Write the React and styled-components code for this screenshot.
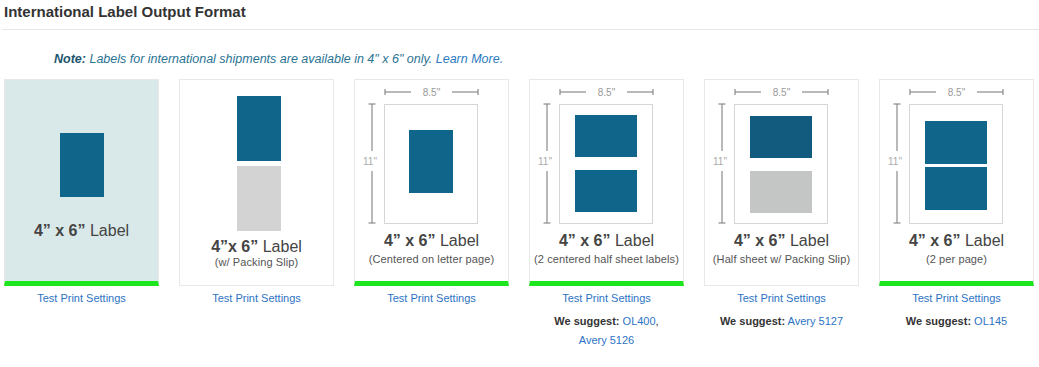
import React from 'react'
import styled, {createGlobalStyle} from 'styled-components'

const GlobalStyle = createGlobalStyle`
    body {
        margin: 0;
        background: #ffffff;
        font-family: "Liberation Sans", Arial, sans-serif;
    }
`

const BLUE = '#10658a'

const Page = styled.div`
    width: 1039px;
    padding: 2px 0 0 2px;
    box-sizing: border-box;
`

const Title = styled.h2`
    margin: 0 0 0 2px;
    font-size: 15px;
    line-height: 20px;
    font-weight: bold;
    color: #333333;
`

const Rule = styled.div`
    margin-top: 7px;
    height: 1px;
    background: #e6e6e6;
`

const Note = styled.p`
    margin: 21px 0 0 52px;
    font-size: 12.5px;
    line-height: 16px;
    font-style: italic;
    color: #2a7393;

    b {
        color: #1b5670;
    }

    a {
        color: #2a7bc0;
        text-decoration: none;
    }
`

const Row = styled.div`
    display: flex;
    gap: 20px;
    margin-top: 13px;
    padding-left: 2px;
`

const Column = styled.div`
    width: 155px;
    display: flex;
    flex-direction: column;
    align-items: center;
    text-align: center;
`

const Card = styled.div`
    width: 155px;
    height: 207px;
    box-sizing: border-box;
    border: 1px solid #e8e8e8;
    border-bottom: ${props => props.$selected ? '5px solid #1ee61e' : '1px solid #e8e8e8'};
    background: ${props => props.$tinted ? '#d9e8e9' : '#ffffff'};
    display: flex;
    flex-direction: column;
    align-items: center;
    margin-top: -1px;
`

const Diagram = styled.svg`
    display: block;
    flex-shrink: 0;
    margin-left: -1px;
`

const LabelText = styled.div`
    font-size: 16px;
    line-height: 18px;
    color: #444444;

    b {
        font-weight: bold;
    }
`

const SubText = styled.div`
    margin-top: ${props => props.$offset}px;
    font-size: 11px;
    line-height: 12px;
    color: #555555;
    letter-spacing: 0.1px;
`

const TestLink = styled.a`
    margin-top: 5px;
    font-size: 11px;
    line-height: 14px;
    color: #2d73c4;
    text-decoration: none;
`

const Suggest = styled.div`
    margin-top: 7px;
    font-size: 11px;
    line-height: 19px;
    color: #333333;

    b {
        font-weight: bold;
    }

    a {
        color: #2d73c4;
        text-decoration: none;
        white-space: nowrap;
    }
`

const Letter = ({children}) => (
    <Diagram width="155" height="152" viewBox="0 0 155 152">
        <g stroke="#8a8a8a" strokeWidth="1.2" fill="none">
            <line x1="31" y1="12" x2="57" y2="12" />
            <line x1="98" y1="12" x2="124" y2="12" />
            <line x1="31" y1="9" x2="31" y2="15" />
            <line x1="124" y1="9" x2="124" y2="15" />
            <line x1="18" y1="24" x2="18" y2="71" />
            <line x1="18" y1="91" x2="18" y2="143" />
            <line x1="14.5" y1="24" x2="21.5" y2="24" />
            <line x1="14.5" y1="143" x2="21.5" y2="143" />
        </g>
        <text x="77.5" y="15.5" textAnchor="middle" fontSize="10" fill="#999999" fontFamily="Liberation Sans, Arial, sans-serif">8.5"</text>
        <text x="16" y="85" textAnchor="middle" fontSize="10" fill="#aaaaaa" fontFamily="Liberation Sans, Arial, sans-serif">11"</text>
        <rect x="30.5" y="24.5" width="93" height="119" fill="#ffffff" stroke="#d6d6d6" />
        {children}
    </Diagram>
)

const formats = [
    {
        key: 'single',
        selected: true,
        tinted: true,
        label: <><b>4” x 6”</b> Label</>,
        graphic: (
            <Diagram width="155" height="142" viewBox="0 0 155 142">
                <rect x="56" y="53" width="44" height="64" fill={BLUE} />
            </Diagram>
        ),
    },
    {
        key: 'slip',
        label: <><b>4”x 6”</b> Label</>,
        sub: '(w/ Packing Slip)',
        subOffset: 0,
        graphic: (
            <Diagram width="155" height="158" viewBox="0 0 155 158">
                <rect x="58" y="16" width="44" height="65" fill={BLUE} />
                <rect x="58" y="86" width="44" height="65" fill="#d3d3d3" />
            </Diagram>
        ),
    },
    {
        key: 'centered',
        selected: true,
        label: <><b>4” x 6”</b> Label</>,
        sub: '(Centered on letter page)',
        subOffset: 3,
        graphic: (
            <Letter>
                <rect x="55" y="50" width="44" height="63" fill={BLUE} />
            </Letter>
        ),
    },
    {
        key: 'half',
        selected: true,
        label: <><b>4” x 6”</b> Label</>,
        sub: '(2 centered half sheet labels)',
        subOffset: 3,
        suggest: <><b>We suggest:</b> <a href="#">OL400</a>, <a href="#">Avery 5126</a></>,
        graphic: (
            <Letter>
                <rect x="46" y="35" width="62" height="42" fill={BLUE} />
                <rect x="46" y="90" width="62" height="42" fill={BLUE} />
            </Letter>
        ),
    },
    {
        key: 'halfslip',
        label: <><b>4” x 6”</b> Label</>,
        sub: '(Half sheet w/ Packing Slip)',
        subOffset: 3,
        suggest: <><b>We suggest:</b> <a href="#">Avery 5127</a></>,
        graphic: (
            <Letter>
                <rect x="46" y="36" width="62" height="42" fill="#125b7f" />
                <rect x="46" y="91" width="62" height="42" fill="#c4c5c5" />
            </Letter>
        ),
    },
    {
        key: 'twoper',
        selected: true,
        label: <><b>4” x 6”</b> Label</>,
        sub: '(2 per page)',
        subOffset: 3,
        suggest: <><b>We suggest:</b> <a href="#">OL145</a></>,
        graphic: (
            <Letter>
                <rect x="46" y="41" width="62" height="43" fill={BLUE} />
                <rect x="46" y="87" width="62" height="43" fill={BLUE} />
            </Letter>
        ),
    },
]

const App = () => {
    return (
        <Page>
            <GlobalStyle />
            <Title>International Label Output Format</Title>
            <Rule />
            <Note>
                <b>Note:</b> Labels for international shipments are available in 4" x 6" only. <a href="#">Learn More.</a>
            </Note>
            <Row>
                {formats.map(f => (
                    <Column key={f.key}>
                        <Card $selected={f.selected} $tinted={f.tinted}>
                            {f.graphic}
                            <LabelText>{f.label}</LabelText>
                            {f.sub && <SubText $offset={f.subOffset}>{f.sub}</SubText>}
                        </Card>
                        <TestLink href="#">Test Print Settings</TestLink>
                        {f.suggest && <Suggest>{f.suggest}</Suggest>}
                    </Column>
                ))}
            </Row>
        </Page>
    )
}

export default App
